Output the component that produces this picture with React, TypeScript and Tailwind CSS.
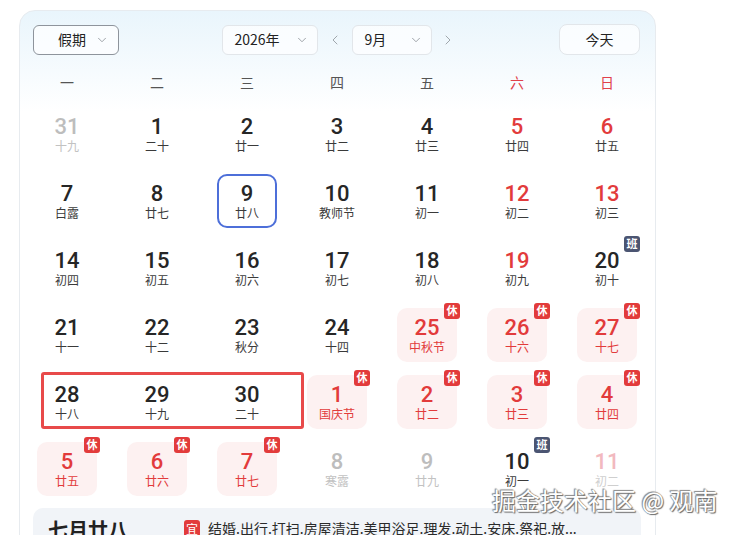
import { ChevronDown, ChevronLeft, ChevronRight } from "lucide-react";

// ---------------------------------------------------------------------------
// Types / data
// ---------------------------------------------------------------------------

type Kind = "normal" | "weekend" | "other" | "otherWeekend" | "holiday";

interface Day {
  n: number;
  lunar: string;
  kind: Kind;
  badge?: "休" | "班";
  selected?: boolean;
}

const d = (n: number, lunar: string, kind: Kind = "normal", extra: Partial<Day> = {}): Day => ({
  n,
  lunar,
  kind,
  ...extra,
});

const WEEK = ["一", "二", "三", "四", "五", "六", "日"];

const DAYS: Day[] = [
  d(31, "十九", "other"), d(1, "二十"), d(2, "廿一"), d(3, "廿二"), d(4, "廿三"), d(5, "廿四", "weekend"), d(6, "廿五", "weekend"),
  d(7, "白露"), d(8, "廿七"), d(9, "廿八", "normal", { selected: true }), d(10, "教师节"), d(11, "初一"), d(12, "初二", "weekend"), d(13, "初三", "weekend"),
  d(14, "初四"), d(15, "初五"), d(16, "初六"), d(17, "初七"), d(18, "初八"), d(19, "初九", "weekend"), d(20, "初十", "normal", { badge: "班" }),
  d(21, "十一"), d(22, "十二"), d(23, "秋分"), d(24, "十四"), d(25, "中秋节", "holiday", { badge: "休" }), d(26, "十六", "holiday", { badge: "休" }), d(27, "十七", "holiday", { badge: "休" }),
  d(28, "十八"), d(29, "十九"), d(30, "二十"), d(1, "国庆节", "holiday", { badge: "休" }), d(2, "廿二", "holiday", { badge: "休" }), d(3, "廿三", "holiday", { badge: "休" }), d(4, "廿四", "holiday", { badge: "休" }),
  d(5, "廿五", "holiday", { badge: "休" }), d(6, "廿六", "holiday", { badge: "休" }), d(7, "廿七", "holiday", { badge: "休" }), d(8, "寒露", "other"), d(9, "廿九", "other"), d(10, "初一", "normal", { badge: "班" }), d(11, "初二", "otherWeekend"),
];

const NUM_COLOR: Record<Kind, string> = {
  normal: "text-[#262626]",
  weekend: "text-[#e23b3b]",
  other: "text-[#bdbdbd]",
  otherWeekend: "text-[#f2b9bf]",
  holiday: "text-[#e23b3b]",
};

const LUNAR_COLOR: Record<Kind, string> = {
  normal: "text-[#3a3a3a]",
  weekend: "text-[#3a3a3a]",
  other: "text-[#c2c2c2]",
  otherWeekend: "text-[#cfcfcf]",
  holiday: "text-[#e23b3b]",
};

const CJK = "font-['Noto_Sans_CJK_SC',sans-serif]";

// ---------------------------------------------------------------------------
// Pieces
// ---------------------------------------------------------------------------

function Select({ label, width, dark }: { label: string; width: string; dark?: boolean }) {
  return (
    <div
      className={`${width} h-[30px] flex items-center justify-between rounded-[6px] border bg-white/70 ${
        dark ? "border-[#8e949c] pl-[24px] pr-[9px]" : "border-[#e2e6ea] pl-[12px] pr-[8px]"
      }`}
    >
      <span className={`text-[14px] text-[#222] ${CJK}`}>{label}</span>
      <ChevronDown size={14} strokeWidth={1.4} color="#8a8f96" />
    </div>
  );
}

function Cell({ day }: { day: Day }) {
  const box =
    day.selected
      ? "border-2 border-[#4d6fd9]"
      : day.kind === "holiday"
      ? "bg-[#fdf1f1]"
      : "";
  return (
    <div className="h-[67px] flex items-center justify-center">
      <div className={`relative w-[60px] h-[54px] rounded-[10px] flex flex-col items-center justify-center ${box}`}>
        <span className={`text-[22px] leading-none font-medium font-['Roboto',sans-serif] ${NUM_COLOR[day.kind]}`}>
          {day.n}
        </span>
        <span className={`mt-[2px] text-[12px] leading-none ${CJK} ${LUNAR_COLOR[day.kind]}`}>{day.lunar}</span>
        {day.badge && (
          <span
            className={`absolute -top-[5px] -right-[3px] w-[16px] h-[16px] rounded-[3px] flex items-center justify-center text-[11px] leading-none font-bold text-white ${CJK} ${
              day.badge === "休" ? "bg-[#e23b3b]" : "bg-[#4b5572]"
            }`}
          >
            {day.badge}
          </span>
        )}
      </div>
    </div>
  );
}

// ---------------------------------------------------------------------------
// Page
// ---------------------------------------------------------------------------

export default function App() {
  return (
    <div className="relative w-[746px] h-[535px] overflow-hidden bg-white">
      <div className="ml-[19px] mt-[10px] w-[637px] h-[560px] rounded-[16px] border border-[#e7ebef] bg-gradient-to-b from-[#e9f5fc] via-white via-[18%] to-white">
        {/* Toolbar */}
        <div className="grid grid-cols-[1fr_auto_1fr] items-center pl-[13px] pr-[15px] pt-[13px]">
          <div>
            <Select label="假期" width="w-[86px]" dark />
          </div>
          <div className="flex items-center">
            <Select label="2026年" width="w-[96px]" />
            <ChevronLeft size={16} strokeWidth={1.4} color="#9aa0a6" className="mx-[9px]" />
            <Select label="9月" width="w-[80px]" />
            <ChevronRight size={16} strokeWidth={1.4} color="#9aa0a6" className="ml-[8px] -mr-[4px]" />
          </div>
          <div className="flex justify-end">
            <div className={`w-[81px] h-[31px] rounded-[8px] border border-[#e2e6ea] bg-white/70 flex items-center justify-center text-[14px] text-[#222] ${CJK}`}>
              今天
            </div>
          </div>
        </div>

        {/* Calendar */}
        <div className="ml-[2px] w-[630px]">
          <div className="grid grid-cols-7 h-[36px] items-center mt-[9px]">
            {WEEK.map((w, i) => (
              <span
                key={w}
                className={`text-center text-[14px] ${CJK} ${i >= 5 ? "text-[#e0414b]" : "text-[#555]"}`}
              >
                {w}
              </span>
            ))}
          </div>
          <div className="relative grid grid-cols-7">
            {DAYS.map((day, i) => (
              <Cell key={i} day={day} />
            ))}
            {/* annotation outline */}
            <div className="absolute left-[19px] top-[272px] w-[263px] h-[57px] border-[3px] border-[#e84a4a] rounded-[3px]" />
          </div>
        </div>

        {/* Bottom almanac */}
        <div className="mt-[6px] ml-[13px] w-[608px] h-[60px] rounded-[10px] bg-[#f1f4f8] flex items-start pt-[9px] pl-[15px]">
          <span className={`text-[20px] font-bold text-[#222] leading-[26px] ${CJK}`}>七月廿八</span>
          <span className={`ml-[56px] mt-[3px] w-[16px] h-[17px] rounded-[3px] bg-[#e23b3b] text-white text-[12px] leading-[17px] text-center ${CJK}`}>
            宜
          </span>
          <span className={`ml-[8px] mt-[1px] text-[14px] text-[#2a2a2a] leading-[20px] ${CJK}`}>
            结婚.出行.打扫.房屋清洁.美甲浴足.理发.动土.安床.祭祀.放...
          </span>
        </div>
      </div>

      {/* watermark */}
      <div
        className={`absolute left-[492px] top-[484px] text-[24px] leading-[32px] text-white ${CJK} [text-shadow:0_0_1px_#777,1px_1px_1px_#666,-1px_-1px_1px_#888]`}
      >
        掘金技术社区 @ 观南
      </div>
    </div>
  );
}
